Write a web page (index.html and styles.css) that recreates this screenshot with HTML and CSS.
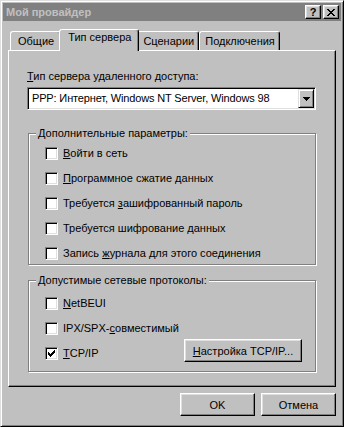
FILE: index.html
```html
<!DOCTYPE html>
<html lang="ru">
<head>
  <meta charset="UTF-8">
  <title>Мой провайдер</title>
  <link rel="stylesheet" href="styles.css">
</head>
<body>

  <div class="window">

    <!-- Title bar -->
    <div class="titlebar">
      <span class="title">Мой провайдер</span>
      <div class="title-buttons">
        <button class="tbtn help">?</button>
        <button class="tbtn close">
          <svg width="8" height="7" viewBox="0 0 8 7" shape-rendering="crispEdges">
            <path d="M0 0h2v1H0z M6 0h2v1H6z M1 1h2v1H1z M5 1h2v1H5z M2 2h4v1H2z M3 3h2v1H3z M2 4h4v1H2z M1 5h2v1H1z M5 5h2v1H5z M0 6h2v1H0z M6 6h2v1H6z" fill="#000"/>
          </svg>
        </button>
      </div>
    </div>

    <!-- Tabs -->
    <div class="tabs">
      <div class="tab">Общие</div>
      <div class="tab active">Тип сервера</div>
      <div class="tab">Сценарии</div>
      <div class="tab">Подключения</div>
    </div>

    <div class="panel">
      <div class="label"><u>Т</u>ип сервера удаленного доступа:</div>

      <div class="combo">
        <span class="combo-text">PPP: Интернет, Windows NT Server, Windows 98</span>
        <span class="combo-btn">
          <svg width="7" height="4" viewBox="0 0 7 4" shape-rendering="crispEdges">
            <path d="M0 0h7v1H0z M1 1h5v1H1z M2 2h3v1H2z M3 3h1v1H3z" fill="#000"/>
          </svg>
        </span>
      </div>

      <fieldset class="group options">
        <legend>Дополнительные параметры:</legend>
        <div class="checks">
          <div class="check"><span class="box"></span><span><u>В</u>ойти в сеть</span></div>
          <div class="check"><span class="box"></span><span><u>П</u>рограммное сжатие данных</span></div>
          <div class="check"><span class="box"></span><span>Требуется <u>з</u>ашифрованный пароль</span></div>
          <div class="check"><span class="box"></span><span>Требуется шифрование <u>д</u>анных</span></div>
          <div class="check"><span class="box"></span><span>Запись <u>ж</u>урнала для этого соединения</span></div>
        </div>
      </fieldset>

      <fieldset class="group protocols">
        <legend>Допустимые сетевые протоколы:</legend>
        <div class="checks">
          <div class="check"><span class="box"></span><span><u>N</u>etBEUI</span></div>
          <div class="check"><span class="box"></span><span>IPX/SPX-<u>с</u>овместимый</span></div>
          <div class="check-row">
            <div class="check">
              <span class="box">
                <svg width="7" height="7" viewBox="0 0 7 7" shape-rendering="crispEdges">
                  <path d="M6 0h1v1H6z M5 1h2v1H5z M0 2h1v1H0z M4 2h3v1H4z M0 3h2v1H0z M3 3h3v1H3z M0 4h5v1H0z M1 5h3v1H1z M2 6h1v1H2z" fill="#000"/>
                </svg>
              </span>
              <span><u>T</u>CP/IP</span>
            </div>
            <button class="btn setup"><u>Н</u>астройка TCP/IP...</button>
          </div>
        </div>
      </fieldset>
    </div>

    <!-- Dialog buttons -->
    <div class="footer">
      <button class="btn">OK</button>
      <button class="btn">Отмена</button>
    </div>

  </div>

</body>
</html>
```

FILE: styles.css
```css
* {
  box-sizing: border-box;
}

body {
  margin: 0;
  background-color: #c0c0c0;
  color: #000;
  font-family: "Liberation Sans", Arial, sans-serif;
  font-size: 11px;
  line-height: 13px;
}

u {
  text-decoration-thickness: 1px;
  text-underline-offset: 1px;
}

/* Window frame */
.window {
  width: 344px;
  height: 427px;
  padding: 2px;
  border: 1px solid;
  border-color: #dfdfdf #000 #000 #dfdfdf;
  box-shadow: inset 1px 1px #fff, inset -1px -1px #808080;
  display: flex;
  flex-direction: column;
}

.titlebar {
  height: 18px;
  background-color: #808080; /* inactive caption */
  display: flex;
  align-items: center;
  justify-content: space-between;
  padding: 0 2px 0 3px;
}

.title {
  color: #c0c0c0;
  font-weight: bold;
}

.title-buttons {
  display: flex;
  gap: 2px;
}

.tbtn {
  width: 16px;
  height: 14px;
  padding: 0;
  background-color: #c0c0c0;
  border: 1px solid;
  border-color: #fff #000 #000 #fff;
  box-shadow: inset -1px -1px #808080, inset 1px 1px #dfdfdf;
  display: flex;
  align-items: center;
  justify-content: center;
  font-family: inherit;
  font-size: 11px;
  font-weight: bold;
  line-height: 12px;
  color: #000;
}

/* Tabs */
.tabs {
  margin-top: 8px;
  height: 21px;
  padding-left: 7px;
  display: flex;
  align-items: flex-end;
}

.tab {
  height: 19px;
  padding: 3px 4px 0 5px;
  border: 1px solid;
  border-bottom: 0;
  border-color: #fff #000 transparent #fff;
  border-radius: 3px 3px 0 0;
  box-shadow: inset -1px 0 #808080;
}

.tab:first-child {
  padding: 3px 6px 0 7px;
}

.tab.active {
  height: 22px;
  margin: 0 -2px -1px;
  padding: 1px 7px 0 8px;
  background-color: #c0c0c0;
  position: relative;
  z-index: 1;
}

/* Tab page */
.panel {
  height: 337px;
  margin: 0 5px;
  padding: 19px 19px 0 18px;
  border: 1px solid;
  border-color: #fff #000 #000 #fff;
  box-shadow: inset -1px -1px #808080;
}

.label {
  height: 13px;
  margin-bottom: 4px;
}

.combo {
  height: 23px;
  padding: 1px;
  border: 1px solid;
  border-color: #808080 #fff #fff #808080;
  box-shadow: inset 1px 1px #000, inset -1px -1px #dfdfdf;
  background-color: #fff;
  display: flex;
}

.combo-text {
  flex: 1;
  padding-left: 3px;
  align-self: center;
  letter-spacing: -0.15px;
}

.combo-btn {
  width: 16px;
  background-color: #c0c0c0;
  border: 1px solid;
  border-color: #dfdfdf #000 #000 #dfdfdf;
  box-shadow: inset 1px 1px #fff, inset -1px -1px #808080;
  display: flex;
  align-items: center;
  justify-content: center;
}

/* Group boxes */
.group {
  margin: 17px 0 0 1px;
  min-width: 0;
  border: 1px solid #808080;
  box-shadow: inset 1px 1px #fff, 1px 1px #fff;
  padding: 7px 0 4px 16px;
}

.group legend {
  margin-left: -9px;
  padding: 0 2px;
  background-color: #c0c0c0;
  line-height: 13px;
}

.group.protocols {
  margin-top: 9px;
  padding: 10px 13px 9px 16px;
}

.checks {
  display: flex;
  flex-direction: column;
  gap: 12px;
}

.check {
  height: 13px;
  display: flex;
  align-items: center;
  gap: 5px;
}

.box {
  width: 13px;
  height: 13px;
  border: 1px solid;
  border-color: #808080 #fff #fff #808080;
  box-shadow: inset 1px 1px #000, inset -1px -1px #dfdfdf;
  background-color: #fff;
  display: flex;
  align-items: center;
  justify-content: center;
}

.check-row {
  display: flex;
  align-items: flex-start;
  justify-content: space-between;
}

/* Push buttons */
.btn {
  width: 75px;
  height: 23px;
  padding: 0;
  background-color: #c0c0c0;
  border: 1px solid;
  border-color: #fff #000 #000 #fff;
  box-shadow: inset -1px -1px #808080, inset 1px 1px #dfdfdf;
  font-family: inherit;
  font-size: 11px;
  color: #000;
}

.btn.setup {
  width: 118px;
  margin-top: -8px;
}

.footer {
  margin-top: 6px;
  padding-right: 5px;
  display: flex;
  justify-content: flex-end;
  gap: 6px;
}
```
